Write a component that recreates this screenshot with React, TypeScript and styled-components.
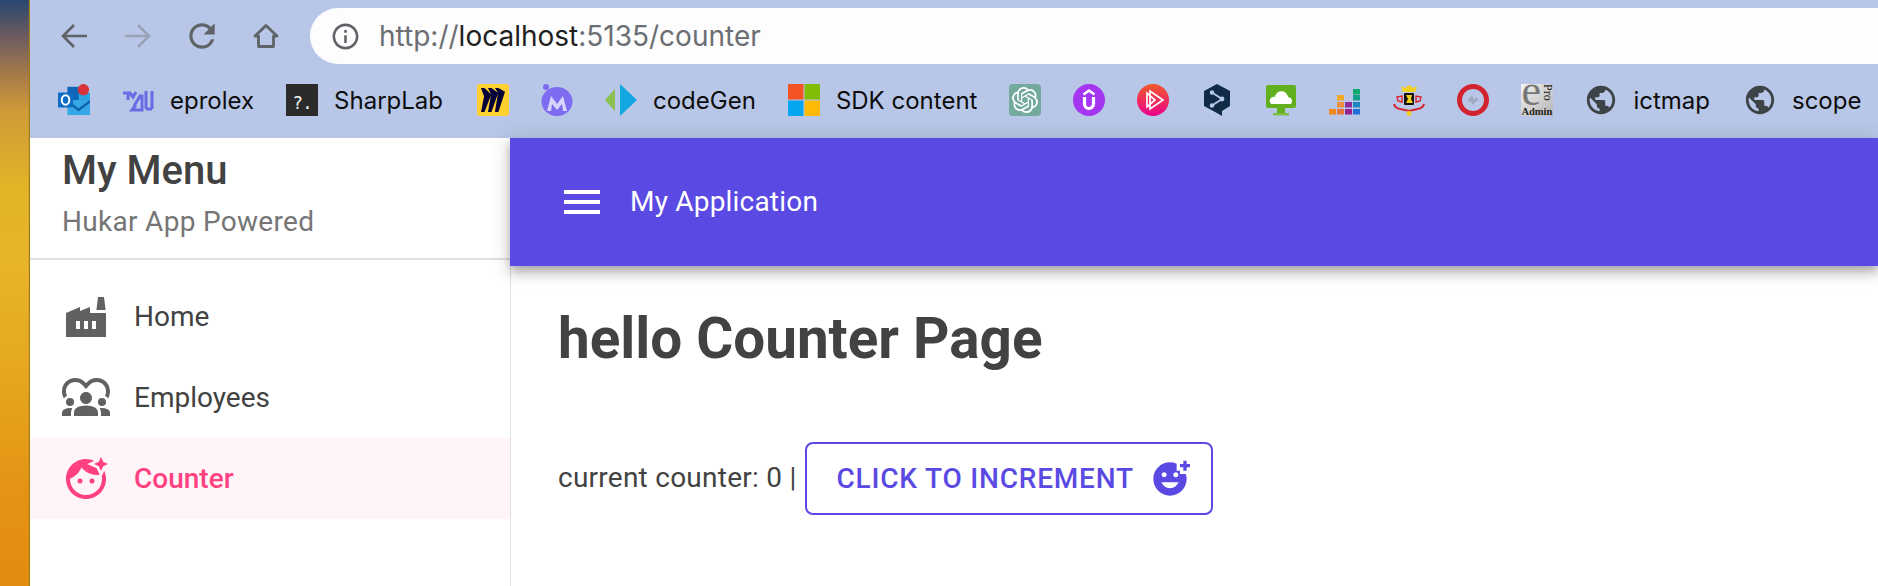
import styled, { createGlobalStyle } from 'styled-components';
import {
  MdAddReaction,
  MdDiversity1,
  MdFaceRetouchingNatural,
  MdFactory,
  MdInfoOutline,
  MdMenu,
  MdPublic,
  MdRefresh,
} from 'react-icons/md';
import { SiMiro, SiOpenai } from 'react-icons/si';

const GlobalStyle = createGlobalStyle`
  html, body {
    margin: 0;
    padding: 0;
    height: 100%;
    overflow: hidden;
    background: #ffffff;
  }
  #root {
    height: 100%;
  }
  * {
    box-sizing: border-box;
  }
`;

const Desktop = styled.div`
  height: 586px;
  width: 1878px;
  padding-left: 30px;
  display: flex;
  background: linear-gradient(90deg, rgba(110, 70, 0, 0) 45%, rgba(110, 70, 0, 0.24) 100%),
    linear-gradient(
      180deg,
      #28466f 0%,
      #6a5a60 6%,
      #a87c48 13%,
      #cf9a38 19%,
      #e2b428 32%,
      #e8b428 45%,
      #e5a71e 64%,
      #e49415 83%,
      #e48b12 100%
    );
`;

const Window = styled.div`
  flex: 1;
  display: flex;
  flex-direction: column;
  box-shadow: -1px 0 1px #a07c15;
  font-family: Roboto, 'Liberation Sans', sans-serif;
`;

const Chrome = styled.header`
  height: 138px;
  background: #b8c7e7;
  display: flex;
  flex-direction: column;
  padding-top: 8px;
`;

const NavRow = styled.div`
  display: flex;
  align-items: center;
  height: 56px;
  padding-left: 12px;
`;

const NavButton = styled.div<{ $dim?: boolean }>`
  width: 64px;
  height: 56px;
  display: flex;
  align-items: center;
  justify-content: center;
  color: ${({ $dim }) => ($dim ? '#9aa3b5' : '#5f6368')};
`;

const AddressBar = styled.div`
  flex: 1;
  height: 56px;
  margin-left: 12px;
  padding-left: 20px;
  background: #fdfdfe;
  border-radius: 28px 0 0 28px;
  display: flex;
  align-items: center;
  gap: 18px;
  color: #5f6368;
`;

const UrlText = styled.span`
  font-family: Inter, Roboto, sans-serif;
  font-size: 28px;
  color: #6b6e72;
`;

const UrlHost = styled.span`
  color: #1f1f1f;
`;

const BookmarkBar = styled.nav`
  display: flex;
  align-items: center;
  gap: 32px;
  height: 32px;
  margin-top: 20px;
  padding-left: 28px;
`;

const Bookmark = styled.div<{ $trail?: number }>`
  display: flex;
  align-items: center;
  gap: 16px;
  height: 32px;
  margin-right: ${({ $trail }) => $trail ?? 0}px;
  color: #0d0d0d;
  font-family: Inter, Roboto, sans-serif;
  font-size: 24px;
  white-space: nowrap;
`;

const Favicon = styled.div`
  width: 32px;
  height: 32px;
  flex: none;
  display: flex;
  align-items: center;
  justify-content: center;
`;

const GlobeIcon = styled(MdPublic)`
  font-size: 34px;
  color: #3e4347;
  flex: none;
`;

const TileIcon = styled.div<{ $bg: string; $round?: boolean; $radius?: number }>`
  width: 32px;
  height: 32px;
  flex: none;
  display: flex;
  align-items: center;
  justify-content: center;
  background: ${({ $bg }) => $bg};
  border-radius: ${({ $round, $radius }) => ($round ? '50%' : `${$radius ?? 0}px`)};
  color: #ffffff;
`;

const SharpTile = styled(TileIcon)`
  font-family: 'DejaVu Sans Mono', monospace;
  font-size: 18px;
  letter-spacing: -1px;
  color: #f0f0f0;
  padding-top: 5px;
`;

const AdminTile = styled.div`
  width: 32px;
  height: 32px;
  flex: none;
  display: flex;
  flex-direction: column;
  background: linear-gradient(135deg, #f2f2f2, #b5b5b5);
  font-family: 'Liberation Serif', serif;
  color: #222222;
`;

const AdminTop = styled.div`
  height: 23px;
  display: flex;
  justify-content: space-between;
`;

const AdminE = styled.span`
  font-size: 44px;
  line-height: 22px;
  margin-top: -4px;
  color: #777777;
`;

const AdminPro = styled.span`
  font-size: 12px;
  line-height: 11px;
  writing-mode: vertical-rl;
`;

const AdminWord = styled.span`
  font-size: 10.5px;
  line-height: 9px;
  font-weight: 700;
`;

const Body = styled.div`
  flex: 1;
  display: flex;
  min-height: 0;
  background: #ffffff;
`;

const Sidebar = styled.aside`
  width: 481px;
  flex: none;
  border-right: 1px solid #e0e0e0;
`;

const SidebarHead = styled.div`
  height: 122px;
  padding-left: 32px;
  padding-top: 9px;
  border-bottom: 2px solid #e0e0e0;
`;

const MenuTitle = styled.div`
  font-size: 40px;
  line-height: 48px;
  font-weight: 500;
  color: #424242;
`;

const MenuSubtitle = styled.div`
  margin-top: 7px;
  font-size: 28px;
  line-height: 40px;
  letter-spacing: 0.3px;
  color: #757575;
`;

const NavList = styled.ul`
  list-style: none;
  margin: 0;
  padding: 16px 0 0;
`;

const NavItem = styled.li<{ $active?: boolean }>`
  height: 81px;
  display: flex;
  align-items: center;
  padding-left: 26px;
  gap: 18px;
  font-size: 28px;
  font-weight: ${({ $active }) => ($active ? 500 : 400)};
  color: ${({ $active }) => ($active ? '#ff4081' : '#424242')};
  background: ${({ $active }) => ($active ? '#fff5f9' : 'transparent')};
`;

const NavIcon = styled.span<{ $active?: boolean }>`
  width: 60px;
  height: 60px;
  display: flex;
  align-items: center;
  justify-content: center;
  font-size: 48px;
  color: ${({ $active }) => ($active ? '#ff4081' : '#616161')};
`;

const Main = styled.main`
  flex: 1;
  display: flex;
  flex-direction: column;
  min-width: 0;
`;

const AppBar = styled.div`
  height: 128px;
  flex: none;
  display: flex;
  align-items: center;
  margin-left: -1px;
  padding-left: 48px;
  gap: 24px;
  background: #5a4ae3;
  color: #ffffff;
  box-shadow: 0 4px 8px -2px rgba(0, 0, 0, 0.2), 0 8px 10px 1px rgba(0, 0, 0, 0.14), 0 2px 20px 2px rgba(0, 0, 0, 0.12);
`;

const AppTitle = styled.span`
  font-size: 28px;
  letter-spacing: 0.2px;
  padding-bottom: 2px;
`;

const Content = styled.div`
  padding: 44px 47px 0;
  color: #424242;
`;

const PageTitle = styled.h1`
  margin: 0;
  font-size: 56.6px;
  line-height: 58px;
  font-weight: 700;
`;

const CounterRow = styled.div`
  display: flex;
  align-items: center;
  gap: 8px;
  margin-top: 74px;
`;

const CounterLabel = styled.span`
  font-size: 28px;
  letter-spacing: 0.25px;
  padding-bottom: 2px;
`;

const IncrementButton = styled.button`
  display: flex;
  align-items: center;
  gap: 16px;
  height: 73px;
  width: 408px;
  padding: 0 22px 0 30px;
  background: transparent;
  border: 2px solid #5a4ae3;
  border-radius: 8px;
  color: #5a4ae3;
  font-family: inherit;
  font-size: 28px;
  font-weight: 500;
  letter-spacing: 0.8px;
  text-transform: uppercase;
  white-space: nowrap;
`;

const ButtonIcon = styled(MdAddReaction)`
  font-size: 40px;
  flex: none;
`;

const BackIcon = ({ color }: { color: string }) => (
  <svg width="28" height="26" viewBox="0 0 28 26" fill="none" stroke={color} strokeWidth="2.6">
    <path d="M27 13H3M14 2 3 13l11 11" />
  </svg>
);

const ForwardIcon = ({ color }: { color: string }) => (
  <svg width="28" height="26" viewBox="0 0 28 26" fill="none" stroke={color} strokeWidth="2.6">
    <path d="M1 13h24M14 2l11 11-11 11" />
  </svg>
);

const HomeIcon = ({ color }: { color: string }) => (
  <svg width="28" height="26" viewBox="0 0 28 26" fill="none" stroke={color} strokeWidth="2.8" strokeLinejoin="round">
    <path d="M14 2.5 3 13h3.5v10.5h15V13H25z" />
  </svg>
);

const OutlookIcon = () => (
  <svg width="34" height="34" viewBox="0 0 34 34">
    <rect x="10" y="3" width="14" height="14" fill="#0f66b8" />
    <rect x="22" y="9" width="12" height="10" fill="#2aa3e0" />
    <path d="M10 17h24v16H10z" fill="#36a6e6" />
    <path d="M10 17l12 9 12-9v3L22 29 10 20z" fill="#0d5ea8" />
    <rect x="0" y="9" width="16" height="16" rx="1" fill="#0f6cc4" />
    <ellipse cx="8" cy="17" rx="4" ry="5" fill="none" stroke="#ffffff" strokeWidth="2.2" />
    <circle cx="27" cy="6" r="6" fill="#d9333a" />
  </svg>
);

const EprolexIcon = () => (
  <svg width="32" height="32" viewBox="0 0 32 32" fill="none" stroke="#5f5be6" strokeWidth="3" opacity="0.85">
    <path d="M1 9h7l3 4 3-5M6 10v6M12 22l6-10h2v14H10l4-5M24 7v18M30 7v18M24 25h6" />
  </svg>
);

const MuralIcon = () => (
  <svg width="32" height="32" viewBox="0 0 32 32">
    <ellipse cx="16" cy="17.5" rx="15.5" ry="14.5" fill="#7d6bf0" />
    <circle cx="5" cy="3" r="3" fill="#7d6bf0" />
    <path d="M6 27l4-15 6 8 6-8 4 15h-4l-1-7-5 6-5-6-1 7z" fill="#d9d4ff" />
  </svg>
);

const CodeGenIcon = () => (
  <svg width="32" height="32" viewBox="0 0 32 32">
    <path d="M0 16 10 5v22z" fill="#8cc152" />
    <path d="M15 0 32 16 15 32z" fill="#12a7e3" />
  </svg>
);

const MicrosoftIcon = () => (
  <svg width="32" height="32" viewBox="0 0 32 32">
    <rect width="15.5" height="15.5" fill="#f35325" />
    <rect x="16.5" width="15.5" height="15.5" fill="#81bc06" />
    <rect y="16.5" width="15.5" height="15.5" fill="#05a6f0" />
    <rect x="16.5" y="16.5" width="15.5" height="15.5" fill="#ffba08" />
  </svg>
);

const UdemyIcon = () => (
  <svg width="32" height="32" viewBox="0 0 32 32" fill="none" stroke="#ffffff">
    <path d="M10.5 10.5 16 6.5l5.5 4" strokeWidth="2.6" />
    <path d="M11.5 13v7a4.5 4.5 0 0 0 9 0v-7" strokeWidth="3.2" />
  </svg>
);

const PluralsightIcon = () => (
  <svg width="32" height="32" viewBox="0 0 32 32" fill="none" stroke="#ffffff" strokeWidth="1.7">
    <path d="M10 9v14l8-7zM13 7v18l13-9z" />
  </svg>
);

const DeeplIcon = () => (
  <svg width="32" height="32" viewBox="0 0 32 32">
    <path d="M16 0 29 7v15l-8 5v5l-5-3-13-7V7z" fill="#0f2b46" />
    <path d="M11 8.5 21 15 11 21.5" fill="none" stroke="#b8c7e7" strokeWidth="1.8" />
    <circle cx="11" cy="8.5" r="2.2" fill="#b8c7e7" />
    <circle cx="21" cy="15" r="2.4" fill="#b8c7e7" />
    <circle cx="11" cy="21.5" r="2.2" fill="#b8c7e7" />
  </svg>
);

const CloudMonitorIcon = () => (
  <svg width="32" height="32" viewBox="0 0 32 32">
    <rect x="1" y="1" width="30" height="23" rx="2" fill="#62b01e" />
    <rect x="12" y="24" width="8" height="5" fill="#62b01e" />
    <rect x="8" y="29" width="16" height="2.5" fill="#7dbf45" />
    <path d="M6 20c-3-4 0-8 4-7 1-7 11-8 13 0 4 0 5 5 3 7z" fill="#ffffff" />
  </svg>
);

const DEEZER_BARS: [number, number, string][] = [
  [0, 25, '#f48a1e'],
  [8, 25, '#e8743c'],
  [8, 18, '#ef8f3a'],
  [8, 11, '#f2a928'],
  [16, 25, '#9a1f90'],
  [16, 18, '#8e2a9c'],
  [24, 25, '#1f6fd6'],
  [24, 18, '#1d86bf'],
  [24, 11, '#14a08c'],
  [24, 5, '#12ab6c'],
];

const DeezerIcon = () => (
  <svg width="32" height="32" viewBox="0 0 32 32">
    {DEEZER_BARS.map(([x, y, fill]) => (
      <rect key={`${x}-${y}`} x={x} y={y} width="7" height="5.5" fill={fill} />
    ))}
  </svg>
);

const CrestIcon = () => (
  <svg width="32" height="32" viewBox="0 0 32 32">
    <path d="M10 8 8 2l4 2 4-3 4 3 4-2-2 6z" fill="#f3d21f" />
    <rect x="11" y="9" width="10" height="12" rx="1" fill="#111111" />
    <path d="M13 11h6l-1 4 2 4h-7l2-4z" fill="#f3d21f" />
    <path d="M1 20c1 6 9 5 15 7 6-2 14-1 15-7" fill="none" stroke="#d8222a" strokeWidth="2" />
    <path d="M4 13l5-1v6l-4-1zM28 13l-5-1v6l4-1z" fill="none" stroke="#d8222a" strokeWidth="1.4" />
    <circle cx="16" cy="29.5" r="2.4" fill="#f3d21f" />
  </svg>
);

const RingIcon = () => (
  <svg width="32" height="32" viewBox="0 0 32 32">
    <circle cx="16" cy="16" r="13.5" fill="none" stroke="#d2232f" strokeWidth="5" />
    <path d="M10 16l3-2 2-3 2 5 2-3 3 3-4 2-2 3-2-3z" fill="#9ea9c0" />
  </svg>
);

const App = () => (
  <>
    <GlobalStyle />
    <Desktop>
      <Window>
        <Chrome>
          <NavRow>
            <NavButton>
              <BackIcon color="#5f6368" />
            </NavButton>
            <NavButton $dim>
              <ForwardIcon color="#9aa3b5" />
            </NavButton>
            <NavButton>
              <MdRefresh size={38} />
            </NavButton>
            <NavButton>
              <HomeIcon color="#5f6368" />
            </NavButton>
            <AddressBar>
              <MdInfoOutline size={31} />
              <UrlText>
                http://<UrlHost>localhost</UrlHost>:5135/counter
              </UrlText>
            </AddressBar>
          </NavRow>
          <BookmarkBar>
            <Favicon>
              <OutlookIcon />
            </Favicon>
            <Bookmark>
              <Favicon>
                <EprolexIcon />
              </Favicon>
              eprolex
            </Bookmark>
            <Bookmark $trail={2}>
              <SharpTile $bg="#2b2b2b">?.</SharpTile>
              SharpLab
            </Bookmark>
            <TileIcon $bg="#ffd02f" $radius={3}>
              <SiMiro color="#050038" size={24} />
            </TileIcon>
            <Favicon>
              <MuralIcon />
            </Favicon>
            <Bookmark>
              <Favicon>
                <CodeGenIcon />
              </Favicon>
              codeGen
            </Bookmark>
            <Bookmark>
              <Favicon>
                <MicrosoftIcon />
              </Favicon>
              SDK content
            </Bookmark>
            <TileIcon $bg="#74aa9c" $radius={4}>
              <SiOpenai size={26} />
            </TileIcon>
            <TileIcon $bg="#a435f0" $round>
              <UdemyIcon />
            </TileIcon>
            <TileIcon $bg="linear-gradient(180deg, #f05a28, #ec008c)" $round>
              <PluralsightIcon />
            </TileIcon>
            <Favicon>
              <DeeplIcon />
            </Favicon>
            <Favicon>
              <CloudMonitorIcon />
            </Favicon>
            <Favicon>
              <DeezerIcon />
            </Favicon>
            <Favicon>
              <CrestIcon />
            </Favicon>
            <Favicon>
              <RingIcon />
            </Favicon>
            <AdminTile>
              <AdminTop>
                <AdminE>e</AdminE>
                <AdminPro>Pro</AdminPro>
              </AdminTop>
              <AdminWord>Admin</AdminWord>
            </AdminTile>
            <Bookmark $trail={2}>
              <Favicon>
                <GlobeIcon />
              </Favicon>
              ictmap
            </Bookmark>
            <Bookmark>
              <Favicon>
                <GlobeIcon />
              </Favicon>
              scope
            </Bookmark>
          </BookmarkBar>
        </Chrome>
        <Body>
          <Sidebar>
            <SidebarHead>
              <MenuTitle>My Menu</MenuTitle>
              <MenuSubtitle>Hukar App Powered</MenuSubtitle>
            </SidebarHead>
            <NavList>
              <NavItem>
                <NavIcon>
                  <MdFactory />
                </NavIcon>
                Home
              </NavItem>
              <NavItem>
                <NavIcon>
                  <MdDiversity1 />
                </NavIcon>
                Employees
              </NavItem>
              <NavItem $active>
                <NavIcon $active>
                  <MdFaceRetouchingNatural />
                </NavIcon>
                Counter
              </NavItem>
            </NavList>
          </Sidebar>
          <Main>
            <AppBar>
              <MdMenu size={48} />
              <AppTitle>My Application</AppTitle>
            </AppBar>
            <Content>
              <PageTitle>hello Counter Page</PageTitle>
              <CounterRow>
                <CounterLabel>current counter: 0 |</CounterLabel>
                <IncrementButton>
                  Click to increment
                  <ButtonIcon />
                </IncrementButton>
              </CounterRow>
            </Content>
          </Main>
        </Body>
      </Window>
    </Desktop>
  </>
);

export default App;
